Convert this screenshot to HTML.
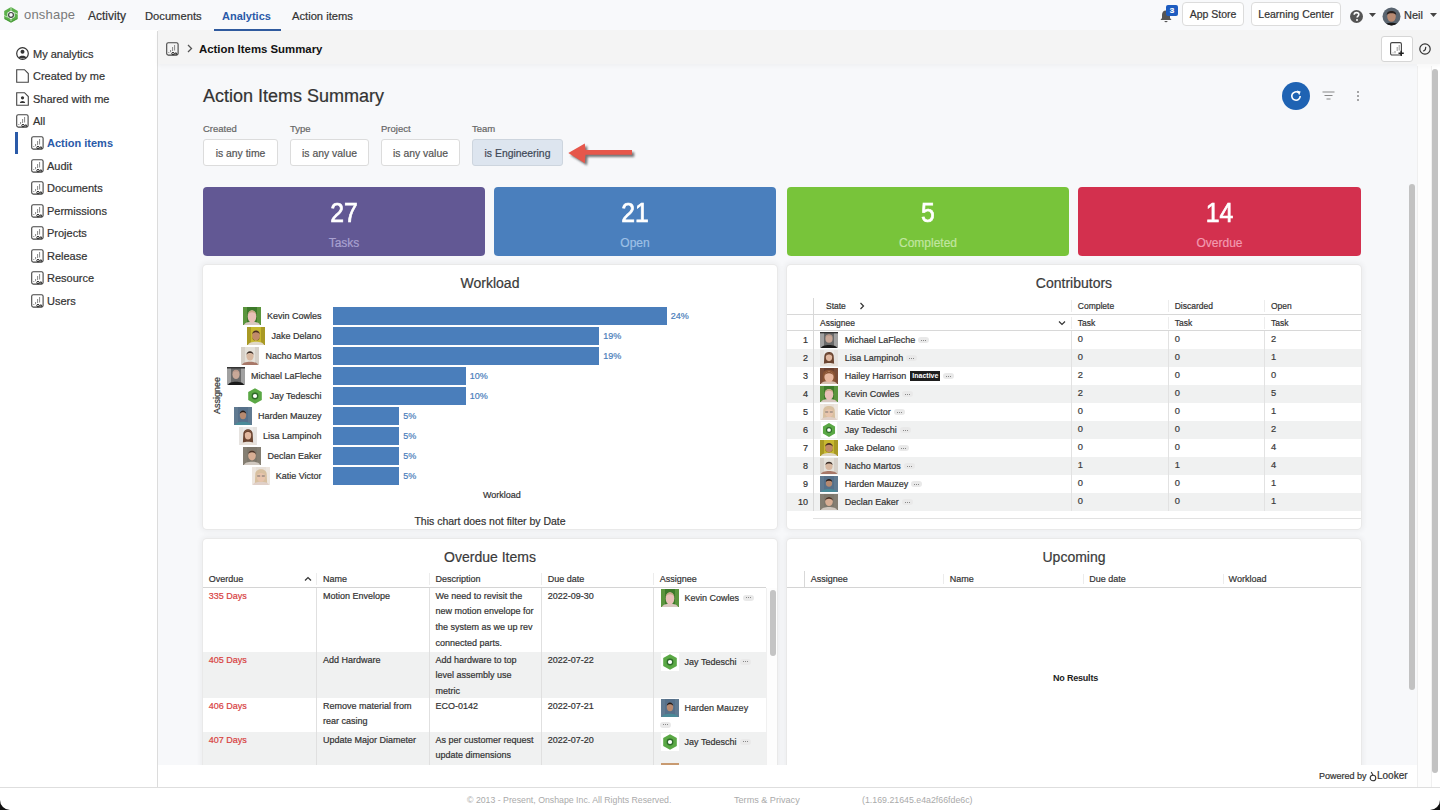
<!DOCTYPE html>
<html><head><meta charset="utf-8">
<style>
*{box-sizing:border-box;margin:0;padding:0}
html,body{width:1440px;height:810px;overflow:hidden;background:#fff;font-family:"Liberation Sans",sans-serif;color:#333;-webkit-text-stroke:0.2px currentColor}
.abs{position:absolute}
#topnav{position:absolute;left:0;top:0;width:1440px;height:30px;background:#f8f9fb;z-index:3}
#sidebar{position:absolute;left:0;top:31px;width:158px;height:756px;background:#fff;border-right:1px solid #dcdcdc}
#crumb{position:absolute;left:158px;top:30px;width:1282px;height:34px;background:#f4f4f4;box-shadow:0 2px 4px rgba(0,0,0,0.035);z-index:2}
#content{position:absolute;left:158px;top:66px;width:1259px;height:699px;background:#f7f8fa;overflow:hidden}
#cbg{position:absolute;left:158px;top:64px;width:1259px;height:2px;background:#f7f8fa}
#looker{position:absolute;left:158px;top:765px;width:1249px;height:22px;background:#fff}
#footer{position:absolute;left:0;top:787px;width:1440px;height:23px;background:#fff;border-top:1px solid #dedede}
.nav{position:absolute;top:8px;font-size:12px;color:#333;white-space:nowrap}
.side{position:absolute;left:32px;font-size:11.5px;color:#333;white-space:nowrap}
.tile{position:absolute;top:121px;height:69px;border-radius:4px;color:#fff;text-align:center}
.tile .n{position:absolute;left:0;right:0;top:9.5px;font-size:27.5px;line-height:32px;font-weight:normal;transform:scaleX(0.9);-webkit-text-stroke:0.7px #fff}
.tile .l{position:absolute;left:0;right:0;top:48.5px;font-size:12px;line-height:14px}
.panel{position:absolute;background:#fff;border-radius:4px;box-shadow:0 0 0 1px #e9e9e9,0 0 5px 3px rgba(0,0,0,0.045)}
.ptitle{position:absolute;left:0;right:0;text-align:center;font-size:14px;color:#3a3a3a}
.btn{position:absolute;top:73px;height:27px;background:#fff;border:1px solid #dcdcdc;border-radius:3px;font-size:10.4px;color:#555;text-align:center;line-height:27px;white-space:nowrap}
.flab{position:absolute;top:57px;font-size:9.5px;color:#666}
</style></head><body>
<div id="topnav">
  <svg class="abs" style="left:3px;top:6px" width="17" height="18" viewBox="0 0 17 18">
    <path d="M8 1 L14.8 4.9 L14.8 12.9 L8 16.8 L1.2 12.9 L1.2 4.9 Z" fill="#5bb04a"/>
    <path d="M8 4.6 L11.6 6.7 L11.6 11.1 L8 13.2 L4.4 11.1 L4.4 6.7 Z" fill="#f8f9fb"/>
    <path d="M1.2 9.5 L4.4 11.1 M8 1 L8 4.6 M14.8 8.2 L11.6 6.7 M8 16.8 L8 13.2" stroke="#e8f2e4" stroke-width="0.7"/>
    <path d="M2 12.5 L8 16 L14 12.5" stroke="#4a9a3a" stroke-width="1" fill="none"/>
    <circle cx="8" cy="8.9" r="2.4" fill="none" stroke="#3a463c" stroke-width="1.2"/>
  </svg>
  <div class="abs" style="left:24px;top:6.5px;font-size:13px;color:#7a7a7a;letter-spacing:0.2px;-webkit-text-stroke:0;white-space:nowrap">onshape</div>
  <div class="nav" style="left:88px;top:9px">Activity</div>
  <div class="nav" style="left:145px;font-size:11.2px;top:9.5px">Documents</div>
  <div class="nav" style="left:222px;color:#2a5aa8;font-weight:bold;font-size:11px;top:9.5px;-webkit-text-stroke:0">Analytics</div>
  <div class="abs" style="left:214px;top:29px;width:67px;height:2px;background:#2f5a9e"></div>
  <div class="nav" style="left:292px;font-size:11.2px;top:9.5px">Action items</div>
  <svg class="abs" style="left:1159px;top:9px" width="14" height="14" viewBox="0 0 14 14">
    <path d="M7 1.5 C4.3 1.5 3 3.6 3 6 L3 9 L1.5 11 L12.5 11 L11 9 L11 6 C11 3.6 9.7 1.5 7 1.5 Z" fill="#555"/>
    <path d="M5.3 12 A1.8 1.8 0 0 0 8.7 12 Z" fill="#555"/>
  </svg>
  <div class="abs" style="left:1166px;top:5px;width:12px;height:11px;background:#1d5cc0;border-radius:2px;color:#fff;font-size:8px;font-weight:bold;text-align:center;line-height:11px">3</div>
  <div class="abs" style="left:1182px;top:2px;width:62px;height:24px;background:#fff;border:1px solid #dcdcdc;border-radius:4px;font-size:10.5px;color:#333;text-align:center;line-height:22px">App Store</div>
  <div class="abs" style="left:1251px;top:2px;width:90px;height:24px;background:#fff;border:1px solid #dcdcdc;border-radius:4px;font-size:10.5px;color:#333;text-align:center;line-height:22px">Learning Center</div>
  <svg class="abs" style="left:1349px;top:9px" width="15" height="15" viewBox="0 0 15 15">
    <circle cx="7.5" cy="7.5" r="6.5" fill="#555"/>
    <path d="M5.2 5.8 C5.2 4.4 6.2 3.6 7.5 3.6 C8.9 3.6 9.8 4.4 9.8 5.6 C9.8 7 8.1 7.2 8.1 8.6" stroke="#fff" stroke-width="1.6" fill="none"/>
    <circle cx="8" cy="11" r="1" fill="#fff"/>
  </svg>
  <svg class="abs" style="left:1369px;top:13px" width="7" height="5" viewBox="0 0 7 5"><path d="M0 0 L7 0 L3.5 4 Z" fill="#444"/></svg>
  <svg class="abs" style="left:1382px;top:7px" width="19" height="19" viewBox="0 0 19 19">
    <defs><clipPath id="avc"><circle cx="9.5" cy="9.5" r="9"/></clipPath></defs>
    <g clip-path="url(#avc)">
      <rect width="19" height="19" fill="#5a6570"/>
      <ellipse cx="9.5" cy="9.5" rx="4.3" ry="5.2" fill="#b88a72"/>
      <path d="M4.8 8 C4 2.5 15 2.5 14.2 8 C13 5.5 6 5.5 4.8 8 Z" fill="#2a2220"/>
      <path d="M1 19 C2 14.5 17 14.5 18 19 Z" fill="#1a1a1a"/>
    </g>
  </svg>
  <div class="abs" style="left:1404px;top:9px;font-size:11px;color:#333">Neil</div>
  <svg class="abs" style="left:1430px;top:13px" width="7" height="5" viewBox="0 0 7 5"><path d="M0 0 L7 0 L3.5 4 Z" fill="#444"/></svg>
</div>
<div id="sidebar">
  <svg class="abs" style="left:16px;top:16px" width="13" height="13" viewBox="0 0 13 13"><circle cx="6.5" cy="6.5" r="5.8" fill="none" stroke="#333" stroke-width="1.2"/><circle cx="6.5" cy="4.8" r="2" fill="#333"/><path d="M2.8 10.6 C3.2 8 9.8 8 10.2 10.6 C9 11.8 4 11.8 2.8 10.6 Z" fill="#333"/></svg>
  <div class="side" style="left:33px;top:17px;font-size:11px">My analytics</div>
  <svg class="abs" style="left:16px;top:38px" width="13" height="14" viewBox="0 0 13 14"><path d="M0.7 0.7 H8.5 L12.3 4.5 V13.3 H0.7 Z" fill="none" stroke="#444" stroke-width="1.1"/></svg>
  <div class="side" style="left:33px;top:39px;font-size:11px">Created by me</div>
  <svg class="abs" style="left:16px;top:61px" width="13" height="14" viewBox="0 0 13 14"><path d="M0.7 0.7 H8.5 L12.3 4.5 V13.3 H0.7 Z" fill="none" stroke="#444" stroke-width="1.1"/><circle cx="6.5" cy="5.8" r="1.6" fill="#333"/><path d="M3.8 11 C4 8.3 9 8.3 9.2 11 Z" fill="#333"/></svg>
  <div class="side" style="left:33px;top:62px;font-size:11px">Shared with me</div>
  <div class="abs" style="left:16px;top:83px"><svg width="13" height="14" viewBox="0 0 13 14"><rect x="0.7" y="0.7" width="11.4" height="12.4" rx="1.6" fill="none" stroke="#444" stroke-width="1.1"/><path d="M2.8 10 v1 M4.6 8 v2.2 M6.6 5 v4 M8.6 3 v5.5" stroke="#888" stroke-width="1"/><circle cx="7" cy="11.6" r="1.2" fill="none" stroke="#222" stroke-width="1"/><path d="M9 12.8 v-1.8 h1.6 v1.8" fill="none" stroke="#222" stroke-width="0.9"/></svg></div>
  <div class="side" style="left:33px;top:84px;font-size:11px">All</div>
  <div class="abs" style="left:15px;top:101px;width:3px;height:22px;background:#2a5aa8"></div>
  <div class="abs" style="left:31px;top:105px"><svg width="13" height="14" viewBox="0 0 13 14"><rect x="0.7" y="0.7" width="11.4" height="12.4" rx="1.6" fill="none" stroke="#444" stroke-width="1.1"/><path d="M2.8 10 v1 M4.6 8 v2.2 M6.6 5 v4 M8.6 3 v5.5" stroke="#888" stroke-width="1"/><circle cx="7" cy="11.6" r="1.2" fill="none" stroke="#222" stroke-width="1"/><path d="M9 12.8 v-1.8 h1.6 v1.8" fill="none" stroke="#222" stroke-width="0.9"/></svg></div>
  <div class="side" style="left:47px;top:106px;color:#2a5aa8;font-weight:bold;font-size:11px;-webkit-text-stroke:0">Action items</div>
  <div class="abs" style="left:31px;top:128px"><svg width="13" height="14" viewBox="0 0 13 14"><rect x="0.7" y="0.7" width="11.4" height="12.4" rx="1.6" fill="none" stroke="#444" stroke-width="1.1"/><path d="M2.8 10 v1 M4.6 8 v2.2 M6.6 5 v4 M8.6 3 v5.5" stroke="#888" stroke-width="1"/><circle cx="7" cy="11.6" r="1.2" fill="none" stroke="#222" stroke-width="1"/><path d="M9 12.8 v-1.8 h1.6 v1.8" fill="none" stroke="#222" stroke-width="0.9"/></svg></div>
  <div class="side" style="left:47px;top:129px;font-size:11px">Audit</div>
  <div class="abs" style="left:31px;top:150px"><svg width="13" height="14" viewBox="0 0 13 14"><rect x="0.7" y="0.7" width="11.4" height="12.4" rx="1.6" fill="none" stroke="#444" stroke-width="1.1"/><path d="M2.8 10 v1 M4.6 8 v2.2 M6.6 5 v4 M8.6 3 v5.5" stroke="#888" stroke-width="1"/><circle cx="7" cy="11.6" r="1.2" fill="none" stroke="#222" stroke-width="1"/><path d="M9 12.8 v-1.8 h1.6 v1.8" fill="none" stroke="#222" stroke-width="0.9"/></svg></div>
  <div class="side" style="left:47px;top:151px;font-size:11px">Documents</div>
  <div class="abs" style="left:31px;top:173px"><svg width="13" height="14" viewBox="0 0 13 14"><rect x="0.7" y="0.7" width="11.4" height="12.4" rx="1.6" fill="none" stroke="#444" stroke-width="1.1"/><path d="M2.8 10 v1 M4.6 8 v2.2 M6.6 5 v4 M8.6 3 v5.5" stroke="#888" stroke-width="1"/><circle cx="7" cy="11.6" r="1.2" fill="none" stroke="#222" stroke-width="1"/><path d="M9 12.8 v-1.8 h1.6 v1.8" fill="none" stroke="#222" stroke-width="0.9"/></svg></div>
  <div class="side" style="left:47px;top:174px;font-size:11px">Permissions</div>
  <div class="abs" style="left:31px;top:195px"><svg width="13" height="14" viewBox="0 0 13 14"><rect x="0.7" y="0.7" width="11.4" height="12.4" rx="1.6" fill="none" stroke="#444" stroke-width="1.1"/><path d="M2.8 10 v1 M4.6 8 v2.2 M6.6 5 v4 M8.6 3 v5.5" stroke="#888" stroke-width="1"/><circle cx="7" cy="11.6" r="1.2" fill="none" stroke="#222" stroke-width="1"/><path d="M9 12.8 v-1.8 h1.6 v1.8" fill="none" stroke="#222" stroke-width="0.9"/></svg></div>
  <div class="side" style="left:47px;top:196px;font-size:11px">Projects</div>
  <div class="abs" style="left:31px;top:218px"><svg width="13" height="14" viewBox="0 0 13 14"><rect x="0.7" y="0.7" width="11.4" height="12.4" rx="1.6" fill="none" stroke="#444" stroke-width="1.1"/><path d="M2.8 10 v1 M4.6 8 v2.2 M6.6 5 v4 M8.6 3 v5.5" stroke="#888" stroke-width="1"/><circle cx="7" cy="11.6" r="1.2" fill="none" stroke="#222" stroke-width="1"/><path d="M9 12.8 v-1.8 h1.6 v1.8" fill="none" stroke="#222" stroke-width="0.9"/></svg></div>
  <div class="side" style="left:47px;top:219px;font-size:11px">Release</div>
  <div class="abs" style="left:31px;top:240px"><svg width="13" height="14" viewBox="0 0 13 14"><rect x="0.7" y="0.7" width="11.4" height="12.4" rx="1.6" fill="none" stroke="#444" stroke-width="1.1"/><path d="M2.8 10 v1 M4.6 8 v2.2 M6.6 5 v4 M8.6 3 v5.5" stroke="#888" stroke-width="1"/><circle cx="7" cy="11.6" r="1.2" fill="none" stroke="#222" stroke-width="1"/><path d="M9 12.8 v-1.8 h1.6 v1.8" fill="none" stroke="#222" stroke-width="0.9"/></svg></div>
  <div class="side" style="left:47px;top:241px;font-size:11px">Resource</div>
  <div class="abs" style="left:31px;top:263px"><svg width="13" height="14" viewBox="0 0 13 14"><rect x="0.7" y="0.7" width="11.4" height="12.4" rx="1.6" fill="none" stroke="#444" stroke-width="1.1"/><path d="M2.8 10 v1 M4.6 8 v2.2 M6.6 5 v4 M8.6 3 v5.5" stroke="#888" stroke-width="1"/><circle cx="7" cy="11.6" r="1.2" fill="none" stroke="#222" stroke-width="1"/><path d="M9 12.8 v-1.8 h1.6 v1.8" fill="none" stroke="#222" stroke-width="0.9"/></svg></div>
  <div class="side" style="left:47px;top:264px;font-size:11px">Users</div>
</div>
<div id="crumb">
  <svg class="abs" style="left:8px;top:12px" width="13" height="14" viewBox="0 0 13 14"><rect x="0.7" y="0.7" width="11.4" height="12.4" rx="1.6" fill="none" stroke="#444" stroke-width="1.1"/><path d="M2.8 10 v1 M4.6 8 v2.2 M6.6 5 v4 M8.6 3 v5.5" stroke="#888" stroke-width="1"/><circle cx="7" cy="11.6" r="1.2" fill="none" stroke="#222" stroke-width="1"/><path d="M9 12.8 v-1.8 h1.6 v1.8" fill="none" stroke="#222" stroke-width="0.9"/></svg>
  <svg class="abs" style="left:29px;top:14px" width="6" height="9" viewBox="0 0 6 9"><path d="M1 1 L4.5 4.5 L1 8" fill="none" stroke="#555" stroke-width="1.3"/></svg>
  <div class="abs" style="left:41px;top:13px;font-size:11.4px;font-weight:bold;color:#111;-webkit-text-stroke:0;white-space:nowrap">Action Items Summary</div>
  <div class="abs" style="left:1223px;top:6px;width:32px;height:26px;background:#fff;border:1px solid #d6d6d6;border-radius:3px"></div>
  <svg class="abs" style="left:1232px;top:12px" width="14" height="14" viewBox="0 0 14 14"><rect x="0.6" y="0.6" width="10.8" height="12.4" rx="1.4" fill="none" stroke="#444" stroke-width="1.1"/><path d="M3 10.5 v0.8 M5 9 v2.3 M7.2 5 v4 M9.2 3 v5.5" stroke="#999" stroke-width="1"/><path d="M8.5 11.3 H13.8 M11.2 8.7 V13.9" stroke="#222" stroke-width="1.5"/></svg>
  <svg class="abs" style="left:1261px;top:13px" width="12" height="12" viewBox="0 0 12 12"><circle cx="6" cy="6" r="5.2" fill="none" stroke="#333" stroke-width="1.2"/><path d="M6.8 3.8 L6.3 6.6 L4.3 8.3" fill="none" stroke="#333" stroke-width="1.2"/></svg>
</div>
<div id="cbg"></div>
<div id="content">
  <div class="abs" style="left:45px;top:20px;font-size:18px;color:#333;white-space:nowrap">Action Items Summary</div>
  <div class="abs" style="left:1124px;top:16px;width:28px;height:28px;border-radius:50%;background:#1f63b3"></div>
  <svg class="abs" style="left:1131px;top:23px" width="14" height="14" viewBox="0 0 14 14"><path d="M11.2 7 A4.2 4.2 0 1 1 9.6 3.7" fill="none" stroke="#fff" stroke-width="1.6"/><path d="M7.8 1.5 L11.6 2.6 L10.2 6.2 Z" fill="#fff"/></svg>
  <svg class="abs" style="left:1164px;top:25px" width="13" height="10" viewBox="0 0 13 10"><path d="M0.5 1 H12.5 M2.5 4.5 H10.5 M4.5 8 H8.5" stroke="#888" stroke-width="1.1"/></svg>
  <svg class="abs" style="left:1198px;top:24px" width="4" height="12" viewBox="0 0 4 12"><circle cx="2" cy="2" r="1" fill="#8a8a8a"/><circle cx="2" cy="6" r="1" fill="#8a8a8a"/><circle cx="2" cy="10" r="1" fill="#8a8a8a"/></svg>
  <div class="flab" style="left:45px">Created</div>
  <div class="flab" style="left:132px">Type</div>
  <div class="flab" style="left:223px">Project</div>
  <div class="flab" style="left:314px">Team</div>
  <div class="btn" style="left:45px;width:75px">is any time</div>
  <div class="btn" style="left:132px;width:79px">is any value</div>
  <div class="btn" style="left:223px;width:79px">is any value</div>
  <div class="btn" style="left:314px;width:91px;background:#dde5ef;border-color:#cdd5de;color:#3d4856">is Engineering</div>

  <svg class="abs" style="left:407px;top:74px" width="80" height="32" viewBox="0 0 80 32">
    <defs><filter id="ash" x="-20%" y="-30%" width="140%" height="160%"><feGaussianBlur stdDeviation="0.8"/></filter></defs>
    <path d="M3.3 13 L19.8 3.6 L20.5 10 L67 10 L67 14.8 L20.5 14.8 L19.8 23.3 Z" fill="#4a4a4a" opacity="0.75" transform="translate(2.2,2.2)" filter="url(#ash)"/>
    <path d="M3.3 13 L19.8 3.6 L20.5 10 L67 10 L67 14.8 L20.5 14.8 L19.8 23.3 Z" fill="#e6574b"/>
  </svg>
  <div class="tile" style="left:45px;width:282px;background:#625894"><div class="n">27</div><div class="l" style="color:#a9a1d0">Tasks</div></div>
  <div class="tile" style="left:336px;width:282px;background:#4a7fbd"><div class="n">21</div><div class="l" style="color:#9ec0e6">Open</div></div>
  <div class="tile" style="left:629px;width:282px;background:#78c43a"><div class="n">5</div><div class="l" style="color:#c1e6a0">Completed</div></div>
  <div class="tile" style="left:920px;width:283px;background:#d3304e"><div class="n">14</div><div class="l" style="color:#f29ab0">Overdue</div></div>

  <div class="panel" id="workload" style="left:45px;top:199px;width:574px;height:264px">
    <div class="ptitle" style="top:10px">Workload</div>
<div class="abs" style="left:129.7px;top:42px;width:334px;height:18px;background:#4a7ebb"></div>
<div class="abs" style="left:467.7px;top:46px;font-size:9px;color:#4a7ebb;white-space:nowrap">24%</div>
<div class="abs" style="right:455.5px;top:42px;height:18px;display:flex;align-items:center;white-space:nowrap;font-size:9px;color:#333"><svg width="18" height="18" viewBox="0 0 18 18" preserveAspectRatio="none"><rect width="18" height="18" fill="#3d7a2a"/><rect x="0" y="0" width="4" height="18" fill="#7ab050" opacity="0.5"/><rect x="14" y="0" width="4" height="18" fill="#7ab050" opacity="0.5"/><path d="M1 18 C1.5 13.5 16.5 13.5 17 18 Z" fill="#d8c8c0"/><ellipse cx="9" cy="9.5" rx="4.3" ry="6.2" fill="#e8c0b8"/><path d="M4.7 8.5 C4.7 1.7999999999999998 13.3 1.7999999999999998 13.3 8.5 C12.3 4.3 5.7 4.3 4.7 8.5 Z" fill="#c8a888"/></svg><span style="margin-left:6px">Kevin Cowles</span></div>
<div class="abs" style="left:129.7px;top:62px;width:266.5px;height:18px;background:#4a7ebb"></div>
<div class="abs" style="left:400.2px;top:66px;font-size:9px;color:#4a7ebb;white-space:nowrap">19%</div>
<div class="abs" style="right:455.5px;top:62px;height:18px;display:flex;align-items:center;white-space:nowrap;font-size:9px;color:#333"><svg width="18" height="18" viewBox="0 0 18 18" preserveAspectRatio="none"><rect width="18" height="18" fill="#c8b830"/><rect x="0" y="0" width="4" height="18" fill="#8a7a18" opacity="0.5"/><rect x="14" y="0" width="4" height="18" fill="#8a7a18" opacity="0.5"/><path d="M1 18 C1.5 13.5 16.5 13.5 17 18 Z" fill="#e0d8c8"/><ellipse cx="9" cy="8.5" rx="3.8" ry="5" fill="#c08a6a"/><path d="M5.2 7.5 C5.2 2.0 12.8 2.0 12.8 7.5 C11.8 4.5 6.2 4.5 5.2 7.5 Z" fill="#4a3020"/><path d="M5.3 9.5 C5.5 15 12.5 15 12.7 9.5 L12.5 11.5 C11.5 14.5 6.5 14.5 5.5 11.5 Z" fill="#5a3a28"/></svg><span style="margin-left:6px">Jake Delano</span></div>
<div class="abs" style="left:129.7px;top:82px;width:266.5px;height:18px;background:#4a7ebb"></div>
<div class="abs" style="left:400.2px;top:86px;font-size:9px;color:#4a7ebb;white-space:nowrap">19%</div>
<div class="abs" style="right:455.5px;top:82px;height:18px;display:flex;align-items:center;white-space:nowrap;font-size:9px;color:#333"><svg width="18" height="18" viewBox="0 0 18 18" preserveAspectRatio="none"><rect width="18" height="18" fill="#e4e0d8"/><rect x="0" y="0" width="4" height="18" fill="#c8c0b8" opacity="0.5"/><rect x="14" y="0" width="4" height="18" fill="#c8c0b8" opacity="0.5"/><path d="M1 18 C1.5 13.5 16.5 13.5 17 18 Z" fill="#a87868"/><ellipse cx="9" cy="9" rx="3.6" ry="4.6" fill="#d8b8a0"/><path d="M5.4 8 C5.4 2.9000000000000004 12.6 2.9000000000000004 12.6 8 C11.6 5.4 6.4 5.4 5.4 8 Z" fill="#3a2e28"/></svg><span style="margin-left:6px">Nacho Martos</span></div>
<div class="abs" style="left:129.7px;top:102px;width:133px;height:18px;background:#4a7ebb"></div>
<div class="abs" style="left:266.7px;top:106px;font-size:9px;color:#4a7ebb;white-space:nowrap">10%</div>
<div class="abs" style="right:455.5px;top:102px;height:18px;display:flex;align-items:center;white-space:nowrap;font-size:9px;color:#333"><svg width="18" height="18" viewBox="0 0 18 18" preserveAspectRatio="none"><rect width="18" height="18" fill="#6a6a6a"/><rect x="0" y="0" width="4" height="18" fill="#d8d8d8" opacity="0.5"/><rect x="14" y="0" width="4" height="18" fill="#d8d8d8" opacity="0.5"/><path d="M1 18 C1.5 13.5 16.5 13.5 17 18 Z" fill="#1a1a1a"/><ellipse cx="9" cy="7.5" rx="3.6" ry="4.6" fill="#c8a898"/><path d="M5.4 6.5 C5.4 1.4000000000000004 12.6 1.4000000000000004 12.6 6.5 C11.6 3.9000000000000004 6.4 3.9000000000000004 5.4 6.5 Z" fill="#b8988a"/><rect x="0" y="0" width="18" height="1.5" fill="#333"/></svg><span style="margin-left:6px">Michael LaFleche</span></div>
<div class="abs" style="left:129.7px;top:122px;width:133px;height:18px;background:#4a7ebb"></div>
<div class="abs" style="left:266.7px;top:126px;font-size:9px;color:#4a7ebb;white-space:nowrap">10%</div>
<div class="abs" style="right:455.5px;top:122px;height:18px;display:flex;align-items:center;white-space:nowrap;font-size:9px;color:#333"><svg width="18" height="18" viewBox="0 0 18 18"><rect width="18" height="18" fill="#fff"/><path d="M9 1.2 L15.8 5.1 L15.8 12.9 L9 16.8 L2.2 12.9 L2.2 5.1 Z" fill="#5aa845"/><circle cx="9" cy="9" r="3.4" fill="#2e6a2a"/><circle cx="9" cy="9" r="2.1" fill="#fff"/></svg><span style="margin-left:6px">Jay Tedeschi</span></div>
<div class="abs" style="left:129.7px;top:142px;width:66.5px;height:18px;background:#4a7ebb"></div>
<div class="abs" style="left:200.2px;top:146px;font-size:9px;color:#4a7ebb;white-space:nowrap">5%</div>
<div class="abs" style="right:455.5px;top:142px;height:18px;display:flex;align-items:center;white-space:nowrap;font-size:9px;color:#333"><svg width="18" height="18" viewBox="0 0 18 18" preserveAspectRatio="none"><rect width="18" height="18" fill="#56708a"/><rect x="0" y="0" width="4" height="18" fill="#6a8498" opacity="0.5"/><rect x="14" y="0" width="4" height="18" fill="#6a8498" opacity="0.5"/><path d="M1 18 C1.5 13.5 16.5 13.5 17 18 Z" fill="#4a8a98"/><ellipse cx="9" cy="8" rx="3.2" ry="4.2" fill="#b88a70"/><path d="M5.8 7 C5.8 2.3 12.2 2.3 12.2 7 C11.2 4.8 6.8 4.8 5.8 7 Z" fill="#221a18"/></svg><span style="margin-left:6px">Harden Mauzey</span></div>
<div class="abs" style="left:129.7px;top:162px;width:66.5px;height:18px;background:#4a7ebb"></div>
<div class="abs" style="left:200.2px;top:166px;font-size:9px;color:#4a7ebb;white-space:nowrap">5%</div>
<div class="abs" style="right:455.5px;top:162px;height:18px;display:flex;align-items:center;white-space:nowrap;font-size:9px;color:#333"><svg width="18" height="18" viewBox="0 0 18 18" preserveAspectRatio="none"><rect width="18" height="18" fill="#eceae8"/><rect x="0" y="0" width="4" height="18" fill="#e0dcd8" opacity="0.5"/><rect x="14" y="0" width="4" height="18" fill="#e0dcd8" opacity="0.5"/><path d="M4.3 7 C4.3 0.5 13.7 0.5 13.7 7 L14.2 18 L3.8 18 Z" fill="#6a4430"/><path d="M1 18 C1.5 13.5 16.5 13.5 17 18 Z" fill="#e8e0d8"/><ellipse cx="9" cy="8" rx="3.2" ry="4.6" fill="#e2b8a0"/><path d="M5.8 7 C5.8 1.9000000000000004 12.2 1.9000000000000004 12.2 7 C11.2 4.4 6.8 4.4 5.8 7 Z" fill="#6a4430"/></svg><span style="margin-left:6px">Lisa Lampinoh</span></div>
<div class="abs" style="left:129.7px;top:182px;width:66.5px;height:18px;background:#4a7ebb"></div>
<div class="abs" style="left:200.2px;top:186px;font-size:9px;color:#4a7ebb;white-space:nowrap">5%</div>
<div class="abs" style="right:455.5px;top:182px;height:18px;display:flex;align-items:center;white-space:nowrap;font-size:9px;color:#333"><svg width="18" height="18" viewBox="0 0 18 18" preserveAspectRatio="none"><rect width="18" height="18" fill="#7e786c"/><rect x="0" y="0" width="4" height="18" fill="#8a8478" opacity="0.5"/><rect x="14" y="0" width="4" height="18" fill="#8a8478" opacity="0.5"/><path d="M1 18 C1.5 13.5 16.5 13.5 17 18 Z" fill="#d0c8c0"/><ellipse cx="9" cy="8.5" rx="3.8" ry="5" fill="#d8ae94"/><path d="M5.2 7.5 C5.2 2.0 12.8 2.0 12.8 7.5 C11.8 4.5 6.2 4.5 5.2 7.5 Z" fill="#4a3428"/></svg><span style="margin-left:6px">Declan Eaker</span></div>
<div class="abs" style="left:129.7px;top:202px;width:66.5px;height:18px;background:#4a7ebb"></div>
<div class="abs" style="left:200.2px;top:206px;font-size:9px;color:#4a7ebb;white-space:nowrap">5%</div>
<div class="abs" style="right:455.5px;top:202px;height:18px;display:flex;align-items:center;white-space:nowrap;font-size:9px;color:#333"><svg width="18" height="18" viewBox="0 0 18 18" preserveAspectRatio="none"><rect width="18" height="18" fill="#e8e0d8"/><rect x="0" y="0" width="4" height="18" fill="#f2ece6" opacity="0.5"/><rect x="14" y="0" width="4" height="18" fill="#f2ece6" opacity="0.5"/><path d="M3.3 7 C3.3 0.5 14.7 0.5 14.7 7 L15.2 18 L2.8 18 Z" fill="#d8c0a0"/><path d="M1 18 C1.5 13.5 16.5 13.5 17 18 Z" fill="#e0d0c8"/><ellipse cx="9" cy="9.5" rx="4.2" ry="5.4" fill="#e8c4ac"/><path d="M4.8 8.5 C4.8 2.5999999999999996 13.2 2.5999999999999996 13.2 8.5 C12.2 5.1 5.8 5.1 4.8 8.5 Z" fill="#d8c0a0"/><path d="M5.2 9 h3 M9.8 9 h3" stroke="#666" stroke-width="0.9"/></svg><span style="margin-left:6px">Katie Victor</span></div>
<div class="abs" style="left:-1px;top:127px;width:30px;height:14px;transform:rotate(-90deg);font-size:9px;color:#333;text-align:center;line-height:14px">Assignee</div>
<div class="abs" style="left:280px;top:225px;font-size:9px;color:#333">Workload</div>
<div class="ptitle" style="top:250px;font-size:10.5px;color:#333">This chart does not filter by Date</div>
  </div>
  <div class="panel" id="contrib" style="left:629px;top:199px;width:574px;height:264px">
    <div class="ptitle" style="top:10px">Contributors</div>
<div class="abs" style="left:0;top:83.6px;width:574px;height:18px;background:#f0f1f1"></div>
<div class="abs" style="left:0;top:119.6px;width:574px;height:18px;background:#f0f1f1"></div>
<div class="abs" style="left:0;top:155.6px;width:574px;height:18px;background:#f0f1f1"></div>
<div class="abs" style="left:0;top:191.6px;width:574px;height:18px;background:#f0f1f1"></div>
<div class="abs" style="left:0;top:227.6px;width:574px;height:18px;background:#f0f1f1"></div>
<div class="abs" style="left:0;top:49px;width:574px;height:1px;background:#d8d8d8"></div>
<div class="abs" style="left:0;top:65px;width:574px;height:1px;background:#d8d8d8"></div>
<div class="abs" style="left:26px;top:33px;width:1px;height:213px;background:#d8d8d8"></div>
<div class="abs" style="left:284px;top:35px;width:1px;height:12px;background:#ececec"></div>
<div class="abs" style="left:284px;top:52px;width:1px;height:12px;background:#ececec"></div>
<div class="abs" style="left:284px;top:66px;width:1px;height:180px;background:#e2e2e2"></div>
<div class="abs" style="left:381px;top:35px;width:1px;height:12px;background:#ececec"></div>
<div class="abs" style="left:381px;top:52px;width:1px;height:12px;background:#ececec"></div>
<div class="abs" style="left:381px;top:66px;width:1px;height:180px;background:#e2e2e2"></div>
<div class="abs" style="left:477px;top:35px;width:1px;height:12px;background:#ececec"></div>
<div class="abs" style="left:477px;top:52px;width:1px;height:12px;background:#ececec"></div>
<div class="abs" style="left:477px;top:66px;width:1px;height:180px;background:#e2e2e2"></div>
<div class="abs" style="left:39px;top:36px;font-size:8.5px;color:#333">State</div>
<svg class="abs" style="left:72px;top:37px" width="6" height="8" viewBox="0 0 6 8"><path d="M1.5 1 L4.5 4 L1.5 7" fill="none" stroke="#333" stroke-width="1.2"/></svg>
<div class="abs" style="left:33px;top:52.5px;font-size:8.5px;color:#333">Assignee</div>
<svg class="abs" style="left:271px;top:55px" width="8" height="6" viewBox="0 0 8 6"><path d="M1 1.5 L4 4.5 L7 1.5" fill="none" stroke="#333" stroke-width="1.2"/></svg>
<div class="abs" style="left:290.8px;top:36px;font-size:8.5px;color:#333">Complete</div>
<div class="abs" style="left:290.8px;top:52.5px;font-size:8.5px;color:#333">Task</div>
<div class="abs" style="left:387.7px;top:36px;font-size:8.5px;color:#333">Discarded</div>
<div class="abs" style="left:387.7px;top:52.5px;font-size:8.5px;color:#333">Task</div>
<div class="abs" style="left:484px;top:36px;font-size:8.5px;color:#333">Open</div>
<div class="abs" style="left:484px;top:52.5px;font-size:8.5px;color:#333">Task</div>
<div class="abs" style="left:0;top:65.6px;width:21px;height:18px;line-height:18px;text-align:right;font-size:9px;color:#333">1</div>
<div class="abs" style="left:33.3px;top:67.1px;height:16px;display:flex;align-items:center;white-space:nowrap;font-size:9px;color:#333"><svg width="18" height="16" viewBox="0 0 18 18" preserveAspectRatio="none"><rect width="18" height="18" fill="#6a6a6a"/><rect x="0" y="0" width="4" height="18" fill="#d8d8d8" opacity="0.5"/><rect x="14" y="0" width="4" height="18" fill="#d8d8d8" opacity="0.5"/><path d="M1 18 C1.5 13.5 16.5 13.5 17 18 Z" fill="#1a1a1a"/><ellipse cx="9" cy="7.5" rx="3.6" ry="4.6" fill="#c8a898"/><path d="M5.4 6.5 C5.4 1.4000000000000004 12.6 1.4000000000000004 12.6 6.5 C11.6 3.9000000000000004 6.4 3.9000000000000004 5.4 6.5 Z" fill="#b8988a"/><rect x="0" y="0" width="18" height="1.5" fill="#333"/></svg><span style="margin-left:6.5px">Michael LaFleche</span><span style="margin-left:3px;display:flex"><span style="display:inline-block;width:11px;height:6px;border-radius:3px;background:#e9e9e9;position:relative;vertical-align:middle"><span style="position:absolute;left:3px;top:2.5px;width:5px;height:1px;border-top:1px dotted #888"></span></span></span></div>
<div class="abs" style="left:290.8px;top:64.6px;line-height:18px;font-size:9.3px;color:#3a3a3a">0</div>
<div class="abs" style="left:387.7px;top:64.6px;line-height:18px;font-size:9.3px;color:#3a3a3a">0</div>
<div class="abs" style="left:484px;top:64.6px;line-height:18px;font-size:9.3px;color:#3a3a3a">2</div>
<div class="abs" style="left:0;top:83.6px;width:21px;height:18px;line-height:18px;text-align:right;font-size:9px;color:#333">2</div>
<div class="abs" style="left:33.3px;top:85.1px;height:16px;display:flex;align-items:center;white-space:nowrap;font-size:9px;color:#333"><svg width="18" height="16" viewBox="0 0 18 18" preserveAspectRatio="none"><rect width="18" height="18" fill="#eceae8"/><rect x="0" y="0" width="4" height="18" fill="#e0dcd8" opacity="0.5"/><rect x="14" y="0" width="4" height="18" fill="#e0dcd8" opacity="0.5"/><path d="M4.3 7 C4.3 0.5 13.7 0.5 13.7 7 L14.2 18 L3.8 18 Z" fill="#6a4430"/><path d="M1 18 C1.5 13.5 16.5 13.5 17 18 Z" fill="#e8e0d8"/><ellipse cx="9" cy="8" rx="3.2" ry="4.6" fill="#e2b8a0"/><path d="M5.8 7 C5.8 1.9000000000000004 12.2 1.9000000000000004 12.2 7 C11.2 4.4 6.8 4.4 5.8 7 Z" fill="#6a4430"/></svg><span style="margin-left:6.5px">Lisa Lampinoh</span><span style="margin-left:3px;display:flex"><span style="display:inline-block;width:11px;height:6px;border-radius:3px;background:#e9e9e9;position:relative;vertical-align:middle"><span style="position:absolute;left:3px;top:2.5px;width:5px;height:1px;border-top:1px dotted #888"></span></span></span></div>
<div class="abs" style="left:290.8px;top:82.6px;line-height:18px;font-size:9.3px;color:#3a3a3a">0</div>
<div class="abs" style="left:387.7px;top:82.6px;line-height:18px;font-size:9.3px;color:#3a3a3a">0</div>
<div class="abs" style="left:484px;top:82.6px;line-height:18px;font-size:9.3px;color:#3a3a3a">1</div>
<div class="abs" style="left:0;top:101.6px;width:21px;height:18px;line-height:18px;text-align:right;font-size:9px;color:#333">3</div>
<div class="abs" style="left:33.3px;top:103.1px;height:16px;display:flex;align-items:center;white-space:nowrap;font-size:9px;color:#333"><svg width="18" height="16" viewBox="0 0 18 18" preserveAspectRatio="none"><rect width="18" height="18" fill="#6a4030"/><rect x="0" y="0" width="4" height="18" fill="#8a5a40" opacity="0.5"/><rect x="14" y="0" width="4" height="18" fill="#8a5a40" opacity="0.5"/><path d="M2.9000000000000004 7 C2.9000000000000004 0.5 15.1 0.5 15.1 7 L15.6 18 L2.4000000000000004 18 Z" fill="#8a5434"/><path d="M1 18 C1.5 13.5 16.5 13.5 17 18 Z" fill="#d8c0b0"/><ellipse cx="9" cy="10" rx="4.6" ry="6" fill="#e8b8a0"/><path d="M4.4 9 C4.4 2.5 13.6 2.5 13.6 9 C12.6 5 5.4 5 4.4 9 Z" fill="#8a5434"/></svg><span style="margin-left:6.5px">Hailey Harrison</span><span style="display:inline-block;margin-left:4px;background:#1e1e1e;color:#fff;font-size:7px;font-weight:bold;-webkit-text-stroke:0;padding:0 2px;line-height:10px;height:10px">Inactive</span><span style="margin-left:3px;display:flex"><span style="display:inline-block;width:11px;height:6px;border-radius:3px;background:#e9e9e9;position:relative;vertical-align:middle"><span style="position:absolute;left:3px;top:2.5px;width:5px;height:1px;border-top:1px dotted #888"></span></span></span></div>
<div class="abs" style="left:290.8px;top:100.6px;line-height:18px;font-size:9.3px;color:#3a3a3a">2</div>
<div class="abs" style="left:387.7px;top:100.6px;line-height:18px;font-size:9.3px;color:#3a3a3a">0</div>
<div class="abs" style="left:484px;top:100.6px;line-height:18px;font-size:9.3px;color:#3a3a3a">0</div>
<div class="abs" style="left:0;top:119.6px;width:21px;height:18px;line-height:18px;text-align:right;font-size:9px;color:#333">4</div>
<div class="abs" style="left:33.3px;top:121.1px;height:16px;display:flex;align-items:center;white-space:nowrap;font-size:9px;color:#333"><svg width="18" height="16" viewBox="0 0 18 18" preserveAspectRatio="none"><rect width="18" height="18" fill="#3d7a2a"/><rect x="0" y="0" width="4" height="18" fill="#7ab050" opacity="0.5"/><rect x="14" y="0" width="4" height="18" fill="#7ab050" opacity="0.5"/><path d="M1 18 C1.5 13.5 16.5 13.5 17 18 Z" fill="#d8c8c0"/><ellipse cx="9" cy="9.5" rx="4.3" ry="6.2" fill="#e8c0b8"/><path d="M4.7 8.5 C4.7 1.7999999999999998 13.3 1.7999999999999998 13.3 8.5 C12.3 4.3 5.7 4.3 4.7 8.5 Z" fill="#c8a888"/></svg><span style="margin-left:6.5px">Kevin Cowles</span><span style="margin-left:3px;display:flex"><span style="display:inline-block;width:11px;height:6px;border-radius:3px;background:#e9e9e9;position:relative;vertical-align:middle"><span style="position:absolute;left:3px;top:2.5px;width:5px;height:1px;border-top:1px dotted #888"></span></span></span></div>
<div class="abs" style="left:290.8px;top:118.6px;line-height:18px;font-size:9.3px;color:#3a3a3a">2</div>
<div class="abs" style="left:387.7px;top:118.6px;line-height:18px;font-size:9.3px;color:#3a3a3a">0</div>
<div class="abs" style="left:484px;top:118.6px;line-height:18px;font-size:9.3px;color:#3a3a3a">5</div>
<div class="abs" style="left:0;top:137.6px;width:21px;height:18px;line-height:18px;text-align:right;font-size:9px;color:#333">5</div>
<div class="abs" style="left:33.3px;top:139.1px;height:16px;display:flex;align-items:center;white-space:nowrap;font-size:9px;color:#333"><svg width="18" height="16" viewBox="0 0 18 18" preserveAspectRatio="none"><rect width="18" height="18" fill="#e8e0d8"/><rect x="0" y="0" width="4" height="18" fill="#f2ece6" opacity="0.5"/><rect x="14" y="0" width="4" height="18" fill="#f2ece6" opacity="0.5"/><path d="M3.3 7 C3.3 0.5 14.7 0.5 14.7 7 L15.2 18 L2.8 18 Z" fill="#d8c0a0"/><path d="M1 18 C1.5 13.5 16.5 13.5 17 18 Z" fill="#e0d0c8"/><ellipse cx="9" cy="9.5" rx="4.2" ry="5.4" fill="#e8c4ac"/><path d="M4.8 8.5 C4.8 2.5999999999999996 13.2 2.5999999999999996 13.2 8.5 C12.2 5.1 5.8 5.1 4.8 8.5 Z" fill="#d8c0a0"/><path d="M5.2 9 h3 M9.8 9 h3" stroke="#666" stroke-width="0.9"/></svg><span style="margin-left:6.5px">Katie Victor</span><span style="margin-left:3px;display:flex"><span style="display:inline-block;width:11px;height:6px;border-radius:3px;background:#e9e9e9;position:relative;vertical-align:middle"><span style="position:absolute;left:3px;top:2.5px;width:5px;height:1px;border-top:1px dotted #888"></span></span></span></div>
<div class="abs" style="left:290.8px;top:136.6px;line-height:18px;font-size:9.3px;color:#3a3a3a">0</div>
<div class="abs" style="left:387.7px;top:136.6px;line-height:18px;font-size:9.3px;color:#3a3a3a">0</div>
<div class="abs" style="left:484px;top:136.6px;line-height:18px;font-size:9.3px;color:#3a3a3a">1</div>
<div class="abs" style="left:0;top:155.6px;width:21px;height:18px;line-height:18px;text-align:right;font-size:9px;color:#333">6</div>
<div class="abs" style="left:33.3px;top:157.1px;height:16px;display:flex;align-items:center;white-space:nowrap;font-size:9px;color:#333"><svg width="18" height="16" viewBox="0 0 18 18"><rect width="18" height="18" fill="#fff"/><path d="M9 1.2 L15.8 5.1 L15.8 12.9 L9 16.8 L2.2 12.9 L2.2 5.1 Z" fill="#5aa845"/><circle cx="9" cy="9" r="3.4" fill="#2e6a2a"/><circle cx="9" cy="9" r="2.1" fill="#fff"/></svg><span style="margin-left:6.5px">Jay Tedeschi</span><span style="margin-left:3px;display:flex"><span style="display:inline-block;width:11px;height:6px;border-radius:3px;background:#e9e9e9;position:relative;vertical-align:middle"><span style="position:absolute;left:3px;top:2.5px;width:5px;height:1px;border-top:1px dotted #888"></span></span></span></div>
<div class="abs" style="left:290.8px;top:154.6px;line-height:18px;font-size:9.3px;color:#3a3a3a">0</div>
<div class="abs" style="left:387.7px;top:154.6px;line-height:18px;font-size:9.3px;color:#3a3a3a">0</div>
<div class="abs" style="left:484px;top:154.6px;line-height:18px;font-size:9.3px;color:#3a3a3a">2</div>
<div class="abs" style="left:0;top:173.6px;width:21px;height:18px;line-height:18px;text-align:right;font-size:9px;color:#333">7</div>
<div class="abs" style="left:33.3px;top:175.1px;height:16px;display:flex;align-items:center;white-space:nowrap;font-size:9px;color:#333"><svg width="18" height="16" viewBox="0 0 18 18" preserveAspectRatio="none"><rect width="18" height="18" fill="#c8b830"/><rect x="0" y="0" width="4" height="18" fill="#8a7a18" opacity="0.5"/><rect x="14" y="0" width="4" height="18" fill="#8a7a18" opacity="0.5"/><path d="M1 18 C1.5 13.5 16.5 13.5 17 18 Z" fill="#e0d8c8"/><ellipse cx="9" cy="8.5" rx="3.8" ry="5" fill="#c08a6a"/><path d="M5.2 7.5 C5.2 2.0 12.8 2.0 12.8 7.5 C11.8 4.5 6.2 4.5 5.2 7.5 Z" fill="#4a3020"/><path d="M5.3 9.5 C5.5 15 12.5 15 12.7 9.5 L12.5 11.5 C11.5 14.5 6.5 14.5 5.5 11.5 Z" fill="#5a3a28"/></svg><span style="margin-left:6.5px">Jake Delano</span><span style="margin-left:3px;display:flex"><span style="display:inline-block;width:11px;height:6px;border-radius:3px;background:#e9e9e9;position:relative;vertical-align:middle"><span style="position:absolute;left:3px;top:2.5px;width:5px;height:1px;border-top:1px dotted #888"></span></span></span></div>
<div class="abs" style="left:290.8px;top:172.6px;line-height:18px;font-size:9.3px;color:#3a3a3a">0</div>
<div class="abs" style="left:387.7px;top:172.6px;line-height:18px;font-size:9.3px;color:#3a3a3a">0</div>
<div class="abs" style="left:484px;top:172.6px;line-height:18px;font-size:9.3px;color:#3a3a3a">4</div>
<div class="abs" style="left:0;top:191.6px;width:21px;height:18px;line-height:18px;text-align:right;font-size:9px;color:#333">8</div>
<div class="abs" style="left:33.3px;top:193.1px;height:16px;display:flex;align-items:center;white-space:nowrap;font-size:9px;color:#333"><svg width="18" height="16" viewBox="0 0 18 18" preserveAspectRatio="none"><rect width="18" height="18" fill="#e4e0d8"/><rect x="0" y="0" width="4" height="18" fill="#c8c0b8" opacity="0.5"/><rect x="14" y="0" width="4" height="18" fill="#c8c0b8" opacity="0.5"/><path d="M1 18 C1.5 13.5 16.5 13.5 17 18 Z" fill="#a87868"/><ellipse cx="9" cy="9" rx="3.6" ry="4.6" fill="#d8b8a0"/><path d="M5.4 8 C5.4 2.9000000000000004 12.6 2.9000000000000004 12.6 8 C11.6 5.4 6.4 5.4 5.4 8 Z" fill="#3a2e28"/></svg><span style="margin-left:6.5px">Nacho Martos</span><span style="margin-left:3px;display:flex"><span style="display:inline-block;width:11px;height:6px;border-radius:3px;background:#e9e9e9;position:relative;vertical-align:middle"><span style="position:absolute;left:3px;top:2.5px;width:5px;height:1px;border-top:1px dotted #888"></span></span></span></div>
<div class="abs" style="left:290.8px;top:190.6px;line-height:18px;font-size:9.3px;color:#3a3a3a">1</div>
<div class="abs" style="left:387.7px;top:190.6px;line-height:18px;font-size:9.3px;color:#3a3a3a">1</div>
<div class="abs" style="left:484px;top:190.6px;line-height:18px;font-size:9.3px;color:#3a3a3a">4</div>
<div class="abs" style="left:0;top:209.6px;width:21px;height:18px;line-height:18px;text-align:right;font-size:9px;color:#333">9</div>
<div class="abs" style="left:33.3px;top:211.1px;height:16px;display:flex;align-items:center;white-space:nowrap;font-size:9px;color:#333"><svg width="18" height="16" viewBox="0 0 18 18" preserveAspectRatio="none"><rect width="18" height="18" fill="#56708a"/><rect x="0" y="0" width="4" height="18" fill="#6a8498" opacity="0.5"/><rect x="14" y="0" width="4" height="18" fill="#6a8498" opacity="0.5"/><path d="M1 18 C1.5 13.5 16.5 13.5 17 18 Z" fill="#4a8a98"/><ellipse cx="9" cy="8" rx="3.2" ry="4.2" fill="#b88a70"/><path d="M5.8 7 C5.8 2.3 12.2 2.3 12.2 7 C11.2 4.8 6.8 4.8 5.8 7 Z" fill="#221a18"/></svg><span style="margin-left:6.5px">Harden Mauzey</span><span style="margin-left:3px;display:flex"><span style="display:inline-block;width:11px;height:6px;border-radius:3px;background:#e9e9e9;position:relative;vertical-align:middle"><span style="position:absolute;left:3px;top:2.5px;width:5px;height:1px;border-top:1px dotted #888"></span></span></span></div>
<div class="abs" style="left:290.8px;top:208.6px;line-height:18px;font-size:9.3px;color:#3a3a3a">0</div>
<div class="abs" style="left:387.7px;top:208.6px;line-height:18px;font-size:9.3px;color:#3a3a3a">0</div>
<div class="abs" style="left:484px;top:208.6px;line-height:18px;font-size:9.3px;color:#3a3a3a">1</div>
<div class="abs" style="left:0;top:227.6px;width:21px;height:18px;line-height:18px;text-align:right;font-size:9px;color:#333">10</div>
<div class="abs" style="left:33.3px;top:229.1px;height:16px;display:flex;align-items:center;white-space:nowrap;font-size:9px;color:#333"><svg width="18" height="16" viewBox="0 0 18 18" preserveAspectRatio="none"><rect width="18" height="18" fill="#7e786c"/><rect x="0" y="0" width="4" height="18" fill="#8a8478" opacity="0.5"/><rect x="14" y="0" width="4" height="18" fill="#8a8478" opacity="0.5"/><path d="M1 18 C1.5 13.5 16.5 13.5 17 18 Z" fill="#d0c8c0"/><ellipse cx="9" cy="8.5" rx="3.8" ry="5" fill="#d8ae94"/><path d="M5.2 7.5 C5.2 2.0 12.8 2.0 12.8 7.5 C11.8 4.5 6.2 4.5 5.2 7.5 Z" fill="#4a3428"/></svg><span style="margin-left:6.5px">Declan Eaker</span><span style="margin-left:3px;display:flex"><span style="display:inline-block;width:11px;height:6px;border-radius:3px;background:#e9e9e9;position:relative;vertical-align:middle"><span style="position:absolute;left:3px;top:2.5px;width:5px;height:1px;border-top:1px dotted #888"></span></span></span></div>
<div class="abs" style="left:290.8px;top:226.6px;line-height:18px;font-size:9.3px;color:#3a3a3a">0</div>
<div class="abs" style="left:387.7px;top:226.6px;line-height:18px;font-size:9.3px;color:#3a3a3a">0</div>
<div class="abs" style="left:484px;top:226.6px;line-height:18px;font-size:9.3px;color:#3a3a3a">1</div>
<div class="abs" style="left:26px;top:252.5px;width:548px;height:1px;background:#e2e2e2"></div>
  </div>
  <div class="panel" id="overdue" style="left:45px;top:473px;width:574px;height:240px">
    <div class="ptitle" style="top:10px">Overdue Items</div>
<div class="abs" style="left:0px;top:48px;width:563px;height:1px;background:#d4d4d4"></div>
<div class="abs" style="left:113px;top:34px;width:1px;height:12px;background:#ececec"></div>
<div class="abs" style="left:225.5px;top:34px;width:1px;height:12px;background:#ececec"></div>
<div class="abs" style="left:338px;top:34px;width:1px;height:12px;background:#ececec"></div>
<div class="abs" style="left:450.3px;top:34px;width:1px;height:12px;background:#ececec"></div>
<div class="abs" style="left:5.8px;top:35px;font-size:9px;color:#333">Overdue</div>
<div class="abs" style="left:120px;top:35px;font-size:9px;color:#333">Name</div>
<div class="abs" style="left:232.5px;top:35px;font-size:9px;color:#333">Description</div>
<div class="abs" style="left:344.8px;top:35px;font-size:9px;color:#333">Due date</div>
<div class="abs" style="left:456.8px;top:35px;font-size:9px;color:#333">Assignee</div>
<svg class="abs" style="left:100.5px;top:37px" width="8" height="6" viewBox="0 0 8 6"><path d="M1 4.5 L4 1.5 L7 4.5" fill="none" stroke="#333" stroke-width="1.2"/></svg>
<div class="abs" style="left:0;top:48.5px;width:563px;height:64px;background:#fff"></div>
<div class="abs" style="left:0;top:112.5px;width:563px;height:46px;background:#f0f1f1"></div>
<div class="abs" style="left:0;top:158.5px;width:563px;height:34px;background:#fff"></div>
<div class="abs" style="left:0;top:192.5px;width:563px;height:40px;background:#f0f1f1"></div>
<div class="abs" style="left:113px;top:49px;width:1px;height:177px;background:#e0e0e0"></div>
<div class="abs" style="left:225.5px;top:49px;width:1px;height:177px;background:#e0e0e0"></div>
<div class="abs" style="left:338px;top:49px;width:1px;height:177px;background:#e0e0e0"></div>
<div class="abs" style="left:450.3px;top:49px;width:1px;height:177px;background:#e0e0e0"></div>
<div class="abs" style="left:5.8px;top:49.7px;font-size:9px;color:#d8413f;line-height:15.8px">335 Days</div>
<div class="abs" style="left:120px;top:49.7px;font-size:9px;color:#333;line-height:15.8px;white-space:nowrap">Motion Envelope</div>
<div class="abs" style="left:232.5px;top:49.7px;font-size:9px;color:#333;line-height:15.8px;white-space:nowrap">We need to revisit the<br>new motion envelope for<br>the system as we up rev<br>connected parts.</div>
<div class="abs" style="left:344.8px;top:49.7px;font-size:9px;color:#333;line-height:15.8px">2022-09-30</div>
<div class="abs" style="left:457.6px;top:49.5px;height:18px;display:flex;align-items:center;white-space:nowrap;font-size:9px;color:#333"><svg width="18" height="18" viewBox="0 0 18 18" preserveAspectRatio="none"><rect width="18" height="18" fill="#3d7a2a"/><rect x="0" y="0" width="4" height="18" fill="#7ab050" opacity="0.5"/><rect x="14" y="0" width="4" height="18" fill="#7ab050" opacity="0.5"/><path d="M1 18 C1.5 13.5 16.5 13.5 17 18 Z" fill="#d8c8c0"/><ellipse cx="9" cy="9.5" rx="4.3" ry="6.2" fill="#e8c0b8"/><path d="M4.7 8.5 C4.7 1.7999999999999998 13.3 1.7999999999999998 13.3 8.5 C12.3 4.3 5.7 4.3 4.7 8.5 Z" fill="#c8a888"/></svg><span style="margin-left:6px">Kevin Cowles</span><span style="margin-left:4px;display:flex"><span style="display:inline-block;width:11px;height:6px;border-radius:3px;background:#e9e9e9;position:relative;vertical-align:middle"><span style="position:absolute;left:3px;top:2.5px;width:5px;height:1px;border-top:1px dotted #888"></span></span></span></div>
<div class="abs" style="left:5.8px;top:113.7px;font-size:9px;color:#d8413f;line-height:15.8px">405 Days</div>
<div class="abs" style="left:120px;top:113.7px;font-size:9px;color:#333;line-height:15.8px;white-space:nowrap">Add Hardware</div>
<div class="abs" style="left:232.5px;top:113.7px;font-size:9px;color:#333;line-height:15.8px;white-space:nowrap">Add hardware to top<br>level assembly use<br>metric</div>
<div class="abs" style="left:344.8px;top:113.7px;font-size:9px;color:#333;line-height:15.8px">2022-07-22</div>
<div class="abs" style="left:457.6px;top:113.5px;height:18px;display:flex;align-items:center;white-space:nowrap;font-size:9px;color:#333"><svg width="18" height="18" viewBox="0 0 18 18"><rect width="18" height="18" fill="#fff"/><path d="M9 1.2 L15.8 5.1 L15.8 12.9 L9 16.8 L2.2 12.9 L2.2 5.1 Z" fill="#5aa845"/><circle cx="9" cy="9" r="3.4" fill="#2e6a2a"/><circle cx="9" cy="9" r="2.1" fill="#fff"/></svg><span style="margin-left:6px">Jay Tedeschi</span><span style="margin-left:4px;display:flex"><span style="display:inline-block;width:11px;height:6px;border-radius:3px;background:#e9e9e9;position:relative;vertical-align:middle"><span style="position:absolute;left:3px;top:2.5px;width:5px;height:1px;border-top:1px dotted #888"></span></span></span></div>
<div class="abs" style="left:5.8px;top:159.7px;font-size:9px;color:#d8413f;line-height:15.8px">406 Days</div>
<div class="abs" style="left:120px;top:159.7px;font-size:9px;color:#333;line-height:15.8px;white-space:nowrap">Remove material from<br>rear casing</div>
<div class="abs" style="left:232.5px;top:159.7px;font-size:9px;color:#333;line-height:15.8px;white-space:nowrap">ECO-0142</div>
<div class="abs" style="left:344.8px;top:159.7px;font-size:9px;color:#333;line-height:15.8px">2022-07-21</div>
<div class="abs" style="left:457.6px;top:159.5px;height:18px;display:flex;align-items:center;white-space:nowrap;font-size:9px;color:#333"><svg width="18" height="18" viewBox="0 0 18 18" preserveAspectRatio="none"><rect width="18" height="18" fill="#56708a"/><rect x="0" y="0" width="4" height="18" fill="#6a8498" opacity="0.5"/><rect x="14" y="0" width="4" height="18" fill="#6a8498" opacity="0.5"/><path d="M1 18 C1.5 13.5 16.5 13.5 17 18 Z" fill="#4a8a98"/><ellipse cx="9" cy="8" rx="3.2" ry="4.2" fill="#b88a70"/><path d="M5.8 7 C5.8 2.3 12.2 2.3 12.2 7 C11.2 4.8 6.8 4.8 5.8 7 Z" fill="#221a18"/></svg><span style="margin-left:6px">Harden Mauzey</span></div>
<div class="abs" style="left:457px;top:182.5px;display:flex"><span style="display:inline-block;width:11px;height:6px;border-radius:3px;background:#e9e9e9;position:relative;vertical-align:middle"><span style="position:absolute;left:3px;top:2.5px;width:5px;height:1px;border-top:1px dotted #888"></span></span></div>
<div class="abs" style="left:5.8px;top:193.7px;font-size:9px;color:#d8413f;line-height:15.8px">407 Days</div>
<div class="abs" style="left:120px;top:193.7px;font-size:9px;color:#333;line-height:15.8px;white-space:nowrap">Update Major Diameter</div>
<div class="abs" style="left:232.5px;top:193.7px;font-size:9px;color:#333;line-height:15.8px;white-space:nowrap">As per customer request<br>update dimensions</div>
<div class="abs" style="left:344.8px;top:193.7px;font-size:9px;color:#333;line-height:15.8px">2022-07-20</div>
<div class="abs" style="left:457.6px;top:193.5px;height:18px;display:flex;align-items:center;white-space:nowrap;font-size:9px;color:#333"><svg width="18" height="18" viewBox="0 0 18 18"><rect width="18" height="18" fill="#fff"/><path d="M9 1.2 L15.8 5.1 L15.8 12.9 L9 16.8 L2.2 12.9 L2.2 5.1 Z" fill="#5aa845"/><circle cx="9" cy="9" r="3.4" fill="#2e6a2a"/><circle cx="9" cy="9" r="2.1" fill="#fff"/></svg><span style="margin-left:6px">Jay Tedeschi</span><span style="margin-left:4px;display:flex"><span style="display:inline-block;width:11px;height:6px;border-radius:3px;background:#e9e9e9;position:relative;vertical-align:middle"><span style="position:absolute;left:3px;top:2.5px;width:5px;height:1px;border-top:1px dotted #888"></span></span></span></div>
<div class="abs" style="left:458px;top:224px;width:18px;height:2px;background:#c89a70"></div>
<div class="abs" style="left:563px;top:49px;width:11px;height:177px;background:#fdfdfd;border-left:1px solid #f0f0f0"></div>
<div class="abs" style="left:566.5px;top:51px;width:6px;height:66px;background:#c4c4c4;border-radius:3px"></div>
  </div>
  <div class="panel" id="upcoming" style="left:629px;top:473px;width:574px;height:240px">
    <div class="ptitle" style="top:10px">Upcoming</div>
<div class="abs" style="left:0;top:48px;width:574px;height:1px;background:#d4d4d4"></div>
<div class="abs" style="left:16.8px;top:32px;width:1px;height:16px;background:#d8d8d8"></div>
<div class="abs" style="left:155.8px;top:35px;width:1px;height:10px;background:#ececec"></div>
<div class="abs" style="left:295.8px;top:35px;width:1px;height:10px;background:#ececec"></div>
<div class="abs" style="left:435.6px;top:35px;width:1px;height:10px;background:#ececec"></div>
<div class="abs" style="left:23.7px;top:35px;font-size:9px;color:#333">Assignee</div>
<div class="abs" style="left:162.7px;top:35px;font-size:9px;color:#333">Name</div>
<div class="abs" style="left:302.2px;top:35px;font-size:9px;color:#333">Due date</div>
<div class="abs" style="left:441.6px;top:35px;font-size:9px;color:#333">Workload</div>
<div class="abs" style="left:266px;top:134px;font-size:9px;color:#222;font-weight:bold;letter-spacing:-0.2px;-webkit-text-stroke:0">No Results</div>
  </div>
</div>
<div class="abs" style="left:1417px;top:66px;width:15px;height:721px;background:#fdfdfd;border-left:1px solid #efefef;border-right:1px solid #f0f0f0"></div>
<div class="abs" style="left:1432px;top:69px;width:6px;height:704px;background:#c2c2c2;border-radius:3px"></div>
<div class="abs" style="left:1409px;top:184px;width:6px;height:506px;background:#c2c2c2;border-radius:3px"></div>
<svg class="abs" style="left:1430px;top:800px;z-index:5" width="10" height="10" viewBox="0 0 10 10"><path d="M10 0 L10 10 L0 10 A10 10 0 0 0 10 0 Z" fill="#111"/></svg>
<svg class="abs" style="left:0px;top:800px;z-index:5" width="10" height="10" viewBox="0 0 10 10"><path d="M0 0 L0 10 L10 10 A10 10 0 0 1 0 0 Z" fill="#111"/></svg>
<div id="looker">
  <div class="abs" style="left:1161px;top:5.5px;font-size:9px;color:#333;white-space:nowrap">Powered by</div>
  <svg class="abs" style="left:1211px;top:6px" width="8" height="11" viewBox="0 0 8 11"><circle cx="4" cy="7" r="2.8" fill="none" stroke="#333" stroke-width="1.1"/><path d="M2.2 1 L4 4.2" stroke="#333" stroke-width="1.1"/></svg>
  <div class="abs" style="left:1219px;top:5px;font-size:10px;color:#333;white-space:nowrap">Looker</div>
</div>
<div id="footer" style="-webkit-text-stroke:0">
  <div class="abs" style="left:467px;top:6.5px;font-size:8.75px;color:#aaa;white-space:nowrap">© 2013 - Present, Onshape Inc. All Rights Reserved.</div>
  <div class="abs" style="left:734px;top:6.5px;font-size:9.1px;color:#aaa;white-space:nowrap">Terms &amp; Privacy</div>
  <div class="abs" style="left:862px;top:6.5px;font-size:8.8px;color:#aaa;white-space:nowrap">(1.169.21645.e4a2f66fde6c)</div>
</div>
</body></html>
